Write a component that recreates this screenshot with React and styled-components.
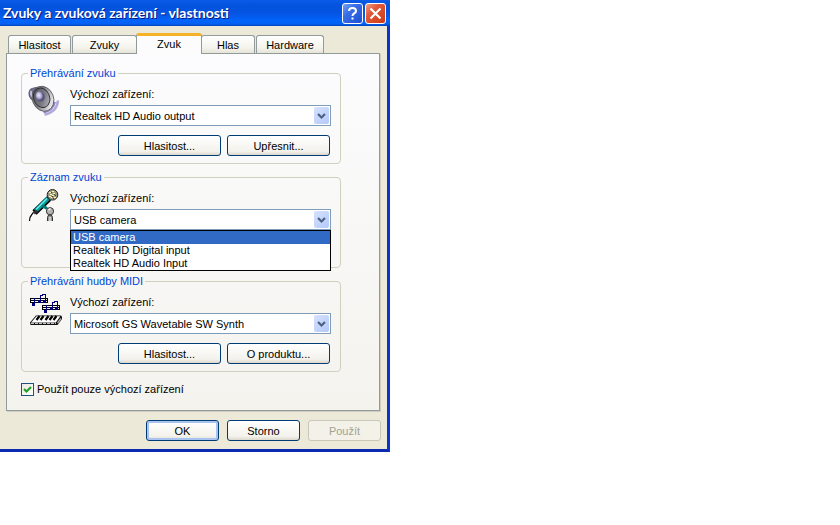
// Imports
import {useState} from 'react'
import styled, {createGlobalStyle, css} from 'styled-components'



// Styles
const GlobalStyle = createGlobalStyle`
  *{
    box-sizing:border-box;
  }
  body{
    margin:0;
    color:#000;
    font-size:11px;
    line-height:14px;
    background-color:#fff;
    font-family:"Liberation Sans", Arial, sans-serif;
  }
`
const Window = styled.main`
  width:100%;
  display:flex;
  max-width:390px;
  flex-direction:column;
  background-color:#ece9d8;
`
const TitleBar = styled.header`
  gap:2px;
  height:26px;
  display:flex;
  padding:0 4px 0 3px;
  align-items:center;
  background:linear-gradient(#0a5be8 0%, #0453dd 20%, #0554e2 50%, #0264fb 80%, #0260f2 92%, #0142b8 100%);
`
const Title = styled.h1`
  flex:1;
  margin:0;
  color:#fff;
  font-size:14px;
  font-weight:700;
  line-height:20px;
  white-space:nowrap;
  text-shadow:1px 1px 0 #0a1883;
  font-family:Lato, "Open Sans", sans-serif;
`
const TitleButton = styled.button`
  width:21px;
  height:21px;
  padding:0;
  display:flex;
  color:#fff;
  align-items:center;
  border-radius:3px;
  justify-content:center;
  border:1px solid #fff;
  background:${({$danger}) => $danger
    ? 'linear-gradient(135deg, #f0a088 0%, #e2593a 35%, #cc3a12 100%)'
    : 'linear-gradient(135deg, #7ba2f5 0%, #3a6fe8 35%, #1c4fd0 100%)'};
`
const Body = styled.div`
  padding:7px 7px 8px 6px;
  border-right:3px solid #0a35c8;
  border-bottom:3px solid #0a2bb0;
`
const Tabs = styled.div`
  gap:1px;
  display:flex;
  padding-left:2px;
  align-items:flex-end;
`
const Tab = styled.button`
  height:18px;
  padding:0;
  color:#000;
  font:inherit;
  width:${({$width}) => $width}px;
  border:1px solid #919b9c;
  border-bottom:0;
  border-radius:3px 3px 0 0;
  background:linear-gradient(#fff, #f4f3ec 70%, #e6e4d8);

  ${({$active}) => $active && css`
    z-index:1;
    height:21px;
    margin:0 -2px -1px;
    padding-bottom:3px;
    position:relative;
    border-top:3px solid #f5b128;
    background:#fcfcfd;
  `}
`
const Panel = styled.section`
  gap:6px;
  display:flex;
  flex-direction:column;
  padding:12px 38px 14px 14px;
  border:1px solid #919b9c;
  box-shadow:1px 1px 0 #d0cebf;
  background:linear-gradient(#fcfcfe, #f4f3ee);
`
const Group = styled.fieldset`
  margin:0;
  padding:0;
  min-width:0;
  min-height:98px;
  border:1px solid #d0d0bf;
  border-radius:4px;
`
const GroupTitle = styled.legend`
  color:#0046d5;
  padding:0 2px;
  margin-left:6px;
`
const GroupContent = styled.div`
  gap:8px;
  display:flex;
  padding:5px 9px 7px 6px;
`
const Icon = styled.svg`
  flex:none;
  width:34px;
  height:34px;
`
const Fields = styled.div`
  flex:1;
  min-width:0;
  display:flex;
  padding-top:2px;
  flex-direction:column;
`
const Label = styled.label`
  margin-bottom:4px;
`
const SelectBox = styled.div`
  position:relative;
`
const Select = styled.select`
  width:100%;
  height:21px;
  display:block;
  color:#000;
  font:inherit;
  appearance:none;
  border-radius:0;
  padding:0 20px 0 3px;
  border:1px solid #7f9db9;
  background-color:#fff;
`
const Arrow = styled.svg`
  top:2px;
  right:2px;
  width:15px;
  height:17px;
  position:absolute;
  border-radius:2px;
  pointer-events:none;
  background:linear-gradient(135deg, #d6e2fe, #b4c9f8);
`
const List = styled.ul`
  left:0;
  right:0;
  top:100%;
  margin:0;
  padding:0;
  z-index:2;
  position:absolute;
  list-style:none;
  border:1px solid #000;
  background-color:#fff;
`
const ListItem = styled.li`
  line-height:13px;
  padding:0 2px;
  color:${({$selected}) => $selected ? '#fff' : '#000'};
  background-color:${({$selected}) => $selected ? '#316ac5' : 'transparent'};
`
const ButtonRow = styled.div`
  gap:6px;
  display:flex;
  margin-top:9px;
  padding-right:1px;
  justify-content:flex-end;
`
const Button = styled.button`
  padding:0;
  height:21px;
  color:#000;
  font:inherit;
  border-radius:3px;
  border:1px solid #003c74;
  width:${({$wide}) => $wide ? 103 : 73}px;
  background:linear-gradient(#fff, #f3f2ec 80%, #dcd8cc);

  ${({$primary}) => $primary && css`
    box-shadow:inset 0 0 0 2px #a9c3f0;
  `}
  &:disabled{
    color:#a1a192;
    border-color:#c9c7ba;
    background:#f3f1e8;
  }
`
const CheckRow = styled.label`
  gap:3px;
  display:flex;
  margin-top:4px;
  align-items:center;
`
const CheckBox = styled.span`
  width:13px;
  height:13px;
  position:relative;
`
const CheckInput = styled.input`
  margin:0;
  width:13px;
  height:13px;
  display:block;
  appearance:none;
  border:1px solid #1c5180;
  background:linear-gradient(135deg, #e9e9e4, #fff);

  &:not(:checked) + svg{
    display:none;
  }
`
const CheckMark = styled.svg`
  top:0;
  left:0;
  width:13px;
  height:13px;
  position:absolute;
  pointer-events:none;
`
const Footer = styled.footer`
  gap:8px;
  display:flex;
  margin-top:9px;
  margin-right:-1px;
  justify-content:flex-end;
`



// Icons
const SpeakerIcon = () => (
  <Icon viewBox="0 0 34 34" aria-hidden="true">
    <defs>
      <linearGradient id="rim" x1="0" y1="0" x2="1" y2="1">
        <stop offset="0" stopColor="#a5a5ac"/>
        <stop offset="0.4" stopColor="#77777e"/>
        <stop offset="0.8" stopColor="#e8e8ea"/>
        <stop offset="1" stopColor="#88888e"/>
      </linearGradient>
      <linearGradient id="cone" x1="0" y1="0" x2="1" y2="1">
        <stop offset="0" stopColor="#4a4a52"/>
        <stop offset="0.6" stopColor="#7f7f88"/>
        <stop offset="1" stopColor="#c9c9d0"/>
      </linearGradient>
      <radialGradient id="dome" cx="0.4" cy="0.35">
        <stop offset="0" stopColor="#f1f0ff"/>
        <stop offset="0.6" stopColor="#a9a7d0"/>
        <stop offset="1" stopColor="#54527c"/>
      </radialGradient>
    </defs>
    <path d="M30 15.5Q29 27 16.5 29.8" fill="none" stroke="#b0a9da" strokeWidth="2.6"/>
    <path d="M27 17Q25 25.5 15.5 27.5" fill="none" stroke="#8d86c4" strokeWidth="2"/>
    <path d="M11 2Q6 2.5 2.5 4Q0 7 1.2 11Q2.5 15 6.5 16.5Z" fill="#6e6e90" stroke="#55556c" strokeWidth="0.8"/>
    <path d="M3.2 6Q2.2 9 4.2 12" fill="none" stroke="#c9c9e4" strokeWidth="1.8"/>
    <ellipse cx="15" cy="13.8" rx="10.6" ry="12.8" transform="rotate(-22 15 13.8)" fill="url(#rim)" stroke="#55555a" strokeWidth="0.8"/>
    <ellipse cx="13.6" cy="12.8" rx="8" ry="10" transform="rotate(-22 13.6 12.8)" fill="url(#cone)" stroke="#2c2c31" strokeWidth="0.9"/>
    <ellipse cx="12.2" cy="11.4" rx="4.4" ry="5.2" transform="rotate(-22 12.2 11.4)" fill="url(#dome)"/>
  </Icon>
)
const MicrophoneIcon = () => (
  <Icon viewBox="0 0 34 34" aria-hidden="true">
    <path d="M8 22Q5 23 3.5 26Q1.5 28 1.5 32" fill="none" stroke="#000" strokeWidth="1.2"/>
    <path d="M6.5 23.5L21 9.5" stroke="#000" strokeWidth="6"/>
    <path d="M7.5 22L20 9.5" stroke="#009c9c" strokeWidth="4"/>
    <path d="M8 20.5L19 9.5" stroke="#6ff2ee" strokeWidth="1.3"/>
    <path d="M6 24.5L9 21.5" stroke="#333" strokeWidth="3"/>
    <path d="M14 16.5L19 19.5" stroke="#007878" strokeWidth="3"/>
    <circle cx="24.5" cy="5.8" r="5.3" fill="#9a9a86" stroke="#222" strokeWidth="1"/>
    <path d="M21 3.5h2M24 2.5h2M22 5.5h2M25 4.5h2M21 7.5h2M24 6.5h2M26 8.5h2M23 8.5h1" stroke="#fdf7a2" strokeWidth="1"/>
    <path d="M23 3.5h1M26 5.5h1M24 7.5h1M27 6.5h1M25 9.5h1" stroke="#44443c" strokeWidth="1"/>
    <circle cx="22" cy="22.2" r="3.6" fill="#b4b4b4" stroke="#333" strokeWidth="1"/>
    <path d="M20.5 21L22.5 19.5" stroke="#fff" strokeWidth="1.5"/>
    <path d="M19.5 32V28.5Q19.5 26 22 26T24.5 28.5V32" fill="#999" stroke="#333" strokeWidth="1"/>
    <path d="M22 28v4" stroke="#fff" strokeWidth="1"/>
  </Icon>
)
const MidiIcon = () => (
  <Icon viewBox="0 0 34 34" aria-hidden="true" shapeRendering="crispEdges">
    <path d="M2 5.5h18M2 7.5h18M2 9.5h18M14 12.5h18M14 14.5h18M14 16.5h18" stroke="#000" strokeWidth="1"/>
    <path d="M2.5 5v5M19.5 5v5M14.5 12v5M31.5 12v5" stroke="#000" strokeWidth="1"/>
    <g fill="#000080">
      <path d="M6 5h1v7h-1zM12 2h1v6h-1zM17 1h1v7h-1zM12 2h3v1h-3zM14 1h4v1h-4z"/>
      <path d="M18 12h1v7h-1zM24 9h1v6h-1zM29 8h1v7h-1zM24 9h3v1h-3zM26 8h4v1h-4z"/>
      <path d="M4 10h3v3h-3zM10 7h3v3h-3zM15 7h3v3h-3zM16 17h3v3h-3zM22 14h3v3h-3zM27 14h3v3h-3z"/>
    </g>
    <g shapeRendering="auto">
      <path d="M8 22.5H33L34 23.5V26L29.5 32H2.5L2 29.5Z" fill="#111"/>
      <path d="M8.5 23.2H32.3L27.8 29.5H3.2Z" fill="#fff"/>
      <path d="M3 30.4h25" stroke="#c8c8c8" strokeWidth="1.2" strokeDasharray="3 1"/>
      <path d="M11.5 23L8.5 27M15.5 23L12.5 27M20.5 23L17.5 27M24.5 23L21.5 27M28.5 23L25.5 27" stroke="#000" strokeWidth="2.2"/>
      <path d="M29.5 30L33 25.5" stroke="#aaa" strokeWidth="1.4"/>
    </g>
  </Icon>
)



// Device picker, with the option list under it while it is open
const DeviceSelect = ({id, options, opened}) => {
  const [device, setDevice] = useState(options[0])

  return (
    <>
      <Label htmlFor={id}>Výchozí zařízení:</Label>
      <SelectBox>
        <Select id={id} value={device} onChange={(e) => {setDevice(e.target.value)}}>
          {options.map((option) => <option key={option}>{option}</option>)}
        </Select>
        <Arrow viewBox="0 0 15 17" aria-hidden="true">
          <path d="M4 7L7.5 10.5L11 7" fill="none" stroke="#4d6185" strokeWidth="2.2"/>
        </Arrow>
        {opened && (
          <List role="listbox">
            {options.map((option) => (
              <ListItem
                key={option}
                role="option"
                aria-selected={option === device}
                $selected={option === device}
                onClick={() => {setDevice(option)}}
              >
                {option}
              </ListItem>
            ))}
          </List>
        )}
      </SelectBox>
    </>
  )
}



// Main Function
const App = () => {
  const [activeTab, setActiveTab] = useState('Zvuk')
  const tabs = [
    {name:'Hlasitost', width:63},
    {name:'Zvuky', width:65},
    {name:'Zvuk', width:66},
    {name:'Hlas', width:54},
    {name:'Hardware', width:68},
  ]

  return (
    <>
      <GlobalStyle/>
      <Window>
        <TitleBar>
          <Title>Zvuky a zvuková zařízení - vlastnosti</Title>
          <TitleButton type="button">
            <svg width="15" height="15" viewBox="0 0 15 15" aria-hidden="true">
              <path d="M4 5Q4 2 7.5 2T11 5Q11 6.5 9 7.5Q7.5 8.3 7.5 10" fill="none" stroke="#fff" strokeWidth="2"/>
              <path d="M6.5 11.5h2v2h-2z" fill="#fff"/>
            </svg>
          </TitleButton>
          <TitleButton type="button" $danger>
            <svg width="15" height="15" viewBox="0 0 15 15" aria-hidden="true">
              <path d="M2.5 2.5L12.5 12.5M12.5 2.5L2.5 12.5" stroke="#fff" strokeWidth="2.2"/>
            </svg>
          </TitleButton>
        </TitleBar>
        <Body>
          <Tabs role="tablist">
            {tabs.map(({name, width}) => (
              <Tab
                key={name}
                type="button"
                role="tab"
                aria-selected={name === activeTab}
                $width={width}
                $active={name === activeTab}
                onClick={() => {setActiveTab(name)}}
              >
                {name}
              </Tab>
            ))}
          </Tabs>
          <Panel>
            <Group>
              <GroupTitle>Přehrávání zvuku</GroupTitle>
              <GroupContent>
                <SpeakerIcon/>
                <Fields>
                  <DeviceSelect id="playback" options={['Realtek HD Audio output']}/>
                  <ButtonRow>
                    <Button type="button" $wide>Hlasitost...</Button>
                    <Button type="button" $wide>Upřesnit...</Button>
                  </ButtonRow>
                </Fields>
              </GroupContent>
            </Group>
            <Group>
              <GroupTitle>Záznam zvuku</GroupTitle>
              <GroupContent>
                <MicrophoneIcon/>
                <Fields>
                  <DeviceSelect
                    id="recording"
                    options={['USB camera', 'Realtek HD Digital input', 'Realtek HD Audio Input']}
                    opened
                  />
                </Fields>
              </GroupContent>
            </Group>
            <Group>
              <GroupTitle>Přehrávání hudby MIDI</GroupTitle>
              <GroupContent>
                <MidiIcon/>
                <Fields>
                  <DeviceSelect id="midi" options={['Microsoft GS Wavetable SW Synth']}/>
                  <ButtonRow>
                    <Button type="button" $wide>Hlasitost...</Button>
                    <Button type="button" $wide>O produktu...</Button>
                  </ButtonRow>
                </Fields>
              </GroupContent>
            </Group>
            <CheckRow>
              <CheckBox>
                <CheckInput type="checkbox" defaultChecked/>
                <CheckMark viewBox="0 0 13 13" aria-hidden="true">
                  <path d="M3 6L5.5 8.5L10 4" fill="none" stroke="#21a121" strokeWidth="2.2"/>
                </CheckMark>
              </CheckBox>
              Použít pouze výchozí zařízení
            </CheckRow>
          </Panel>
          <Footer>
            <Button type="button" $primary>OK</Button>
            <Button type="button">Storno</Button>
            <Button type="button" disabled>Použít</Button>
          </Footer>
        </Body>
      </Window>
    </>
  )
}



// Export
export default App
